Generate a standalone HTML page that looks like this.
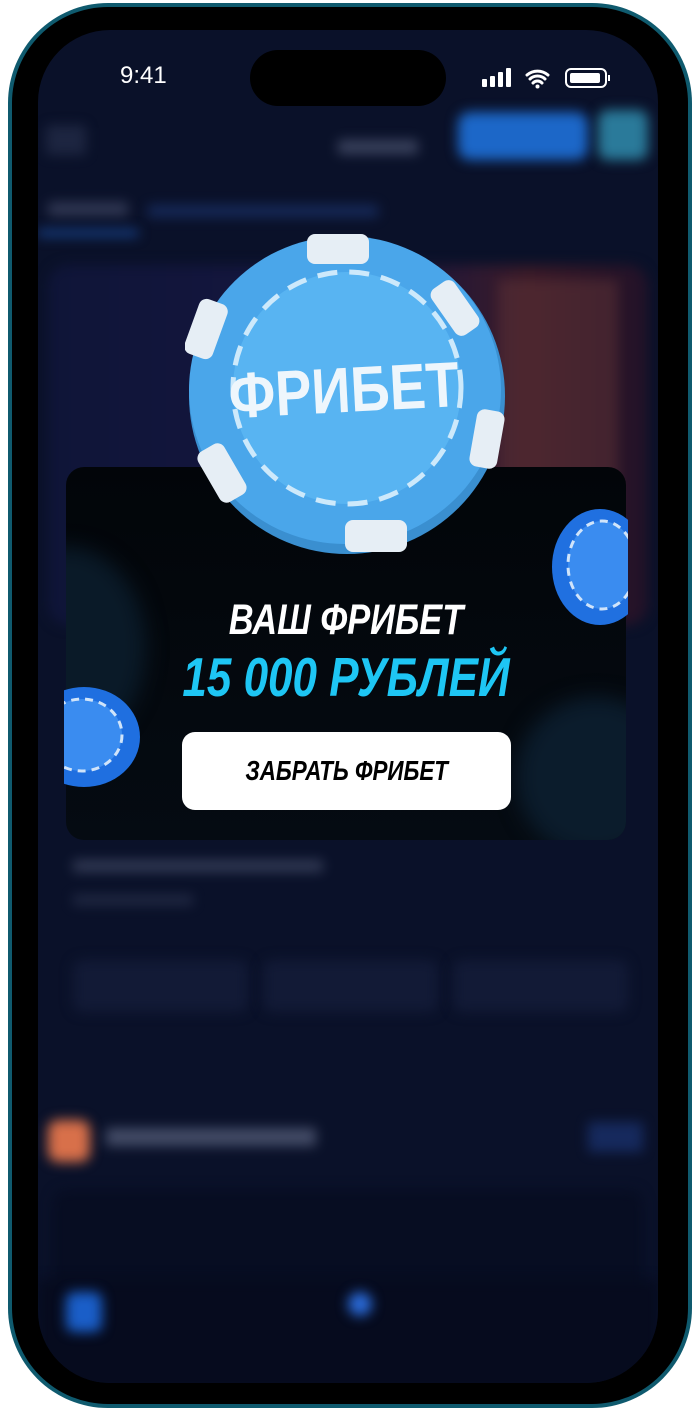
<!DOCTYPE html>
<html><head><meta charset="utf-8"><style>
*{margin:0;padding:0;box-sizing:border-box}
body{width:696px;height:1411px;background:#fff;position:relative;overflow:hidden;font-family:"Liberation Sans",sans-serif}
.frame{position:absolute;left:8px;top:3px;width:684px;height:1405px;border-radius:100px;background:#0f5a6e;}
.bezel{position:absolute;left:12px;top:7px;width:676px;height:1397px;border-radius:96px;background:#000;}
.screen{position:absolute;left:38px;top:30px;width:620px;height:1353px;border-radius:72px;background:#0a1129;overflow:hidden}
.b{position:absolute;filter:blur(6px)}
.island{position:absolute;left:250px;top:50px;width:196px;height:56px;border-radius:28px;background:#000}
.t{position:absolute;color:#fff}
.modal{position:absolute;left:66px;top:467px;width:560px;height:373px;border-radius:18px;background:linear-gradient(180deg,#020509,#050b12);overflow:hidden}
.h1{position:absolute;left:66px;width:560px;text-align:center;font-weight:bold;font-style:italic;transform:scaleX(.8)}
.btn{position:absolute;left:182px;top:732px;width:329px;height:78px;border-radius:13px;background:#fff;text-align:center;line-height:78px;font-weight:bold;font-style:italic;font-size:28px;color:#000}
</style></head><body>
<div class="frame"></div><div class="bezel"></div>
<div class="screen">
 <div class="b" style="left:8px;top:95px;width:40px;height:30px;background:#2a3350;opacity:.6"></div>
 <div class="b" style="left:300px;top:110px;width:80px;height:14px;background:#5a6380;opacity:.6"></div>
 <div class="b" style="left:420px;top:82px;width:130px;height:48px;border-radius:12px;background:#1c67c8"></div>
 <div class="b" style="left:560px;top:80px;width:50px;height:50px;border-radius:10px;background:#2a7a9a"></div>
 <div class="b" style="left:10px;top:172px;width:80px;height:14px;background:#4a5170;opacity:.6"></div>
 <div class="b" style="left:110px;top:175px;width:230px;height:12px;background:#1e3a7a;opacity:.6"></div>
 <div class="b" style="left:0px;top:200px;width:100px;height:6px;background:#1a4a9a"></div>
 <div class="b" style="left:10px;top:235px;width:600px;height:360px;border-radius:20px;background:linear-gradient(90deg,#0f1538,#161640 55%,#3a1a28 80%,#221228)"></div>
 <div class="b" style="left:460px;top:250px;width:120px;height:300px;background:#6a3a3a;opacity:.4"></div>
 <div class="b" style="left:35px;top:830px;width:250px;height:12px;background:#5a6380;opacity:.5"></div>
 <div class="b" style="left:35px;top:865px;width:120px;height:10px;background:#3a4360;opacity:.5"></div>
 <div class="b" style="left:35px;top:930px;width:175px;height:52px;border-radius:10px;background:#121a36"></div>
 <div class="b" style="left:225px;top:930px;width:175px;height:52px;border-radius:10px;background:#121a36"></div>
 <div class="b" style="left:415px;top:930px;width:175px;height:52px;border-radius:10px;background:#121a36"></div>
 <div class="b" style="left:10px;top:1090px;width:42px;height:42px;border-radius:10px;background:#d8704a"></div>
 <div class="b" style="left:68px;top:1098px;width:210px;height:18px;background:#6a7390;opacity:.6"></div>
 <div class="b" style="left:550px;top:1092px;width:55px;height:30px;background:#1e3a80;opacity:.6"></div>
 <div class="b" style="left:15px;top:1160px;width:590px;height:130px;border-radius:14px;background:#070d22"></div>
 <div class="b" style="left:0;top:1250px;width:620px;height:110px;background:#060b1e"></div>
 <div class="b" style="left:28px;top:1262px;width:36px;height:40px;border-radius:8px;background:#1a5ec8"></div>
 <div class="b" style="left:310px;top:1262px;width:24px;height:24px;border-radius:12px;background:#2a6ad8"></div>
</div>
<div class="island"></div>
<div class="t" style="left:120px;top:62px;font-size:24px">9:41</div>
<svg style="position:absolute;left:480px;top:66px" width="135" height="24" viewBox="0 0 135 24">
 <rect x="2" y="13" width="5" height="8" rx="1" fill="#fff"/><rect x="10" y="10" width="5" height="11" rx="1" fill="#fff"/><rect x="18" y="6" width="5" height="15" rx="1" fill="#fff"/><rect x="26" y="2" width="5" height="19" rx="1" fill="#fff"/>
 <path d="M47 9a16 16 0 0 1 21 0M50 13a11 11 0 0 1 15 0M53 17a6 6 0 0 1 9 0" stroke="#fff" stroke-width="3" fill="none" stroke-linecap="round"/><circle cx="57.5" cy="20.5" r="2" fill="#fff"/>
 <rect x="86" y="3" width="40" height="18" rx="5" stroke="#fff" stroke-width="2" fill="none"/><rect x="90" y="7" width="30" height="10" rx="2" fill="#fff"/><rect x="128" y="9" width="2" height="6" fill="#fff"/>
</svg>
<div class="modal">
 <div style="position:absolute;left:-80px;top:80px;width:160px;height:200px;border-radius:50%;background:#0a1a28;filter:blur(10px)"></div>
 <div style="position:absolute;left:450px;top:230px;width:160px;height:160px;border-radius:50%;background:#0b1c2c;filter:blur(10px)"></div>
</div>
<svg style="position:absolute;left:185px;top:230px" width="325" height="328" viewBox="0 0 325 328">
 <ellipse cx="162" cy="166" rx="158" ry="158" fill="#3a8fd0"/>
 <ellipse cx="160" cy="160" rx="156" ry="154" fill="#4aa6ea"/>
 <ellipse cx="162" cy="158" rx="114" ry="116" fill="#58b4f2" stroke="#cde9fb" stroke-width="5" stroke-dasharray="20 12"/>
 <g fill="#e6eef5">
  <rect x="122" y="4" width="62" height="30" rx="8"/>
  <rect x="256" y="50" width="28" height="56" rx="8" transform="rotate(-35 270 78)"/>
  <rect x="288" y="180" width="28" height="58" rx="8" transform="rotate(10 302 209)"/>
  <rect x="160" y="290" width="62" height="32" rx="8"/>
  <rect x="22" y="214" width="30" height="58" rx="8" transform="rotate(-30 37 243)"/>
  <rect x="6" y="70" width="30" height="58" rx="8" transform="rotate(20 21 99)"/>
 </g>
 <text x="0" y="0" text-anchor="middle" font-family="Liberation Sans" font-weight="bold" font-size="64" fill="#eef6fc" transform="translate(160 182) rotate(-3) scale(0.85 1)">ФРИБЕТ</text>
</svg>
<svg style="position:absolute;left:548px;top:505px" width="80" height="130" viewBox="0 0 80 130"><ellipse cx="52" cy="62" rx="48" ry="58" fill="#2070e0"/><ellipse cx="54" cy="60" rx="34" ry="44" fill="#3a8cf0" stroke="#d0e4fa" stroke-width="3" stroke-dasharray="8 6"/></svg>
<svg style="position:absolute;left:64px;top:685px" width="80" height="105" viewBox="0 0 80 105"><ellipse cx="20" cy="52" rx="56" ry="50" fill="#1f6fe0"/><ellipse cx="18" cy="50" rx="40" ry="36" fill="#3a8cf0" stroke="#d0e4fa" stroke-width="3" stroke-dasharray="8 6"/></svg>
<div class="h1" style="top:596px;font-size:43px;color:#fff">ВАШ ФРИБЕТ</div>
<div class="h1" style="top:645px;font-size:55px;color:#1ec6f4">15 000 РУБЛЕЙ</div>
<div class="btn"><span style="display:inline-block;transform:scaleX(.8)">ЗАБРАТЬ ФРИБЕТ</span></div>
</body></html>
